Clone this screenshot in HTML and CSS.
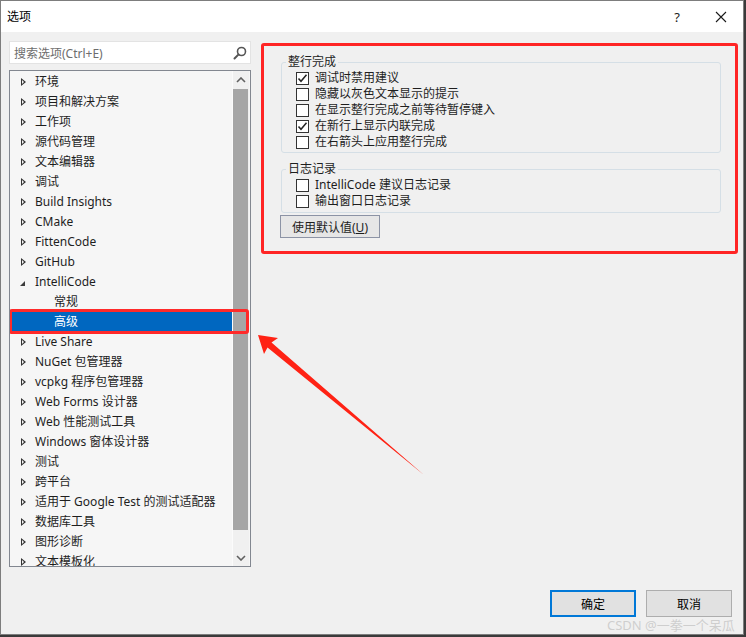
FILE: index.html
```html
<!DOCTYPE html>
<html lang="zh-CN">
<head>
<meta charset="utf-8">
<title>选项</title>
<link rel="stylesheet" href="styles.css">
</head>
<body>
<div class="window">
  <div class="titlebar">
    <span class="title">选项</span>
    <span class="help">?</span>
    <svg class="close" width="12" height="12" viewBox="0 0 12 12"><path d="M1 1 L11 11 M11 1 L1 11" stroke="#1a1a1a" stroke-width="1.1" fill="none"/></svg>
  </div>
  <div class="main">
    <div class="left">
      <div class="search">
        <span class="placeholder">搜索选项(Ctrl+E)</span>
        <svg class="mag" width="14" height="14" viewBox="0 0 14 14"><circle cx="8.5" cy="5.5" r="4" stroke="#555" stroke-width="1.6" fill="none"/><path d="M5.6 8.4 L1.5 12.5" stroke="#555" stroke-width="2" stroke-linecap="round"/></svg>
      </div>
      <div class="tree">
        <div class="rows">
          <div class="row"><i class="tri"></i>环境</div>
          <div class="row"><i class="tri"></i>项目和解决方案</div>
          <div class="row"><i class="tri"></i>工作项</div>
          <div class="row"><i class="tri"></i>源代码管理</div>
          <div class="row"><i class="tri"></i>文本编辑器</div>
          <div class="row"><i class="tri"></i>调试</div>
          <div class="row"><i class="tri"></i>Build Insights</div>
          <div class="row"><i class="tri"></i>CMake</div>
          <div class="row"><i class="tri"></i>FittenCode</div>
          <div class="row"><i class="tri"></i>GitHub</div>
          <div class="row"><i class="tri open"></i>IntelliCode</div>
          <div class="row sub">常规</div>
          <div class="row sub selected">高级</div>
          <div class="row"><i class="tri"></i>Live Share</div>
          <div class="row"><i class="tri"></i>NuGet 包管理器</div>
          <div class="row"><i class="tri"></i>vcpkg 程序包管理器</div>
          <div class="row"><i class="tri"></i>Web Forms 设计器</div>
          <div class="row"><i class="tri"></i>Web 性能测试工具</div>
          <div class="row"><i class="tri"></i>Windows 窗体设计器</div>
          <div class="row"><i class="tri"></i>测试</div>
          <div class="row"><i class="tri"></i>跨平台</div>
          <div class="row"><i class="tri"></i>适用于 Google Test 的测试适配器</div>
          <div class="row"><i class="tri"></i>数据库工具</div>
          <div class="row"><i class="tri"></i>图形诊断</div>
          <div class="row"><i class="tri"></i>文本模板化</div>
        </div>
        <div class="scrollbar">
          <div class="sb-btn"><svg width="10" height="6" viewBox="0 0 10 6"><path d="M1 5 L5 1 L9 5" stroke="#606060" stroke-width="1.6" fill="none"/></svg></div>
          <div class="sb-track"><div class="sb-thumb"></div></div>
          <div class="sb-btn"><svg width="10" height="6" viewBox="0 0 10 6"><path d="M1 1 L5 5 L9 1" stroke="#606060" stroke-width="1.6" fill="none"/></svg></div>
        </div>
        <div class="mark-sel"></div>
      </div>
    </div>
    <div class="right">
      <div class="panel">
        <fieldset class="group">
          <legend>整行完成</legend>
          <div class="checks">
            <label class="chk"><span class="box checked"><svg width="11" height="11" viewBox="0 0 11 11"><path d="M1.5 5.5 L4 8.3 L9.5 1.8" stroke="#222" stroke-width="1.5" fill="none"/></svg></span>调试时禁用建议</label>
            <label class="chk"><span class="box"></span>隐藏以灰色文本显示的提示</label>
            <label class="chk"><span class="box"></span>在显示整行完成之前等待暂停键入</label>
            <label class="chk"><span class="box checked"><svg width="11" height="11" viewBox="0 0 11 11"><path d="M1.5 5.5 L4 8.3 L9.5 1.8" stroke="#222" stroke-width="1.5" fill="none"/></svg></span>在新行上显示内联完成</label>
            <label class="chk"><span class="box"></span>在右箭头上应用整行完成</label>
          </div>
        </fieldset>
        <fieldset class="group g2">
          <legend>日志记录</legend>
          <div class="checks">
            <label class="chk"><span class="box"></span>IntelliCode 建议日志记录</label>
            <label class="chk"><span class="box"></span>输出窗口日志记录</label>
          </div>
        </fieldset>
        <button class="defbtn">使用默认值(<u>U</u>)</button>
      </div>
    </div>
  </div>
  <div class="footer">
    <button class="btn primary">确定</button>
    <button class="btn">取消</button>
  </div>
  <div class="watermark">CSDN @一拳一个呆瓜</div>
  <svg class="arrow" width="744" height="636" viewBox="0 0 744 636"><polygon points="258,335 278,338 271.5,342.5 424,475 267.5,347.5 264,354" fill="#ff2214"/></svg>
</div>
</body>
</html>
```

FILE: styles.css
```css
html, body {
  margin: 0;
  padding: 0;
}
body {
  background: #3a3a3a;
  width: 746px;
  height: 637px;
  font-family: "Noto Sans", "Noto Sans CJK SC", sans-serif;
  font-size: 12px;
  color: #1e1e1e;
}
.window {
  position: relative;
  width: 744px;
  height: 635px;
  box-sizing: border-box;
  border: 1px solid #7d7d7d;
  background: #f0f0f0;
  display: flex;
  flex-direction: column;
}
.titlebar {
  height: 31px;
  background: #fff;
  display: flex;
  align-items: center;
  padding-left: 6px;
  padding-right: 16px;
  flex: none;
}
.title {
  font-size: 12px;
  color: #000;
  flex: 1;
  line-height: 16px;
}
.help {
  font-size: 13px;
  color: #1a1a1a;
  margin-right: 35px;
}
.close {
  display: block;
}
.main {
  flex: 1;
  display: flex;
  gap: 10px;
  padding: 9px 6px 0 8px;
}
.left {
  width: 242px;
  display: flex;
  flex-direction: column;
  flex: none;
}
.search {
  height: 23px;
  box-sizing: border-box;
  border: 1px solid #e3e3e3;
  background: #fff;
  display: flex;
  align-items: center;
  padding: 0 3px 0 4px;
}
.placeholder {
  flex: 1;
  color: #6d6d6d;
  font-size: 12px;
}
.mag {
  display: block;
}
.tree {
  position: relative;
  margin-top: 6px;
  height: 497px;
  box-sizing: border-box;
  border: 1px solid #828790;
  background: #f6f6f6;
  display: flex;
  overflow: hidden;
}
.rows {
  width: 222px;
  flex: none;
  overflow: hidden;
}
.row {
  height: 20px;
  box-sizing: border-box;
  padding-top: 2px;
  line-height: 18px;
  padding-left: 11px;
  display: flex;
  align-items: center;
  white-space: nowrap;
  color: #1e1e1e;
}
.tri {
  width: 14px;
  height: 18px;
  flex: none;
  display: block;
  position: relative;
}
.tri::before {
  content: "";
  position: absolute;
  left: 0;
  top: 5px;
  width: 0;
  height: 0;
  border-top: 4px solid transparent;
  border-bottom: 4px solid transparent;
  border-left: 5px solid #333;
}
.tri::after {
  content: "";
  position: absolute;
  left: 1px;
  top: 7px;
  width: 0;
  height: 0;
  border-top: 2px solid transparent;
  border-bottom: 2px solid transparent;
  border-left: 2.5px solid #f6f6f6;
}
.tri.open::before {
  left: -1px;
  top: 8px;
  border-top: none;
  border-left: 5px solid transparent;
  border-bottom: 5px solid #3c3c3c;
}
.tri.open::after {
  display: none;
}
.row.sub {
  padding-left: 44px;
}
.row.selected {
  background: #0067c0;
  color: #fff;
}
.scrollbar {
  width: 17px;
  flex: none;
  display: flex;
  flex-direction: column;
  background: #f0f0f0;
  border-left: 1px solid #fbfbfb;
  box-sizing: border-box;
}
.sb-btn {
  height: 17px;
  display: flex;
  align-items: center;
  justify-content: center;
  flex: none;
}
.sb-track {
  flex: 1;
  padding: 1px 1px 18px 0;
}
.sb-thumb {
  height: 441px;
  background: #a6a6a6;
}
.mark-sel {
  position: absolute;
  left: -1px;
  top: 238px;
  width: 240px;
  height: 25px;
  box-sizing: border-box;
  border: 3px solid #ff2a2a;
  border-radius: 3px;
}
.right {
  flex: 1;
  padding-top: 2px;
}
.panel {
  border: 3px solid #ff2525;
  border-radius: 3px;
  padding: 10px 14px 13px 17px;
  display: flex;
  flex-direction: column;
  align-items: flex-start;
  width: 477px;
  box-sizing: border-box;
}
.group {
  margin: 0;
  width: 440px;
  box-sizing: border-box;
  border: 1px solid #d5dfe6;
  border-radius: 3px;
  padding: 0 4px 2px 4px;
}
.group legend {
  padding: 0 2px;
  line-height: 12px;
  font-size: 12px;
  color: #1e1e1e;
}
.g2 {
  margin-top: 10px;
  padding-bottom: 3px;
}
.checks {
  padding-left: 10px;
  padding-top: 2px;
  display: flex;
  flex-direction: column;
}
.chk {
  height: 16px;
  display: flex;
  align-items: center;
  line-height: 16px;
  color: #1e1e1e;
}
.box {
  width: 13px;
  height: 13px;
  box-sizing: border-box;
  border: 1px solid #333;
  background: #fff;
  margin-right: 6px;
  display: flex;
  align-items: center;
  justify-content: center;
  flex: none;
}
.box svg {
  display: block;
}
.defbtn {
  margin: 2px 0 0 -1px;
  width: 100px;
  height: 23px;
  border: 1px solid #8c93a5;
  background: #e6e6e6;
  font-family: "Noto Sans", "Noto Sans CJK SC", sans-serif;
  font-size: 12px;
  color: #1e1e1e;
  padding: 0;
}
.defbtn u {
  text-decoration: underline;
}
.footer {
  flex: none;
  display: flex;
  justify-content: flex-end;
  gap: 10px;
  padding: 0 11px 17px 0;
}
.btn {
  width: 86px;
  height: 27px;
  box-sizing: border-box;
  border: 1px solid #adadad;
  background: #e1e1e1;
  font-family: "Noto Sans", "Noto Sans CJK SC", sans-serif;
  font-size: 12px;
  color: #000;
  padding: 0;
}
.btn.primary {
  border: 2px solid #0078d7;
}
.watermark {
  position: absolute;
  left: 606px;
  top: 615px;
  font-size: 13px;
  line-height: 18px;
  color: rgba(200, 200, 200, 0.85);
  white-space: nowrap;
  letter-spacing: 0;
}
.arrow {
  position: absolute;
  left: -1px;
  top: -1px;
  pointer-events: none;
}
```
